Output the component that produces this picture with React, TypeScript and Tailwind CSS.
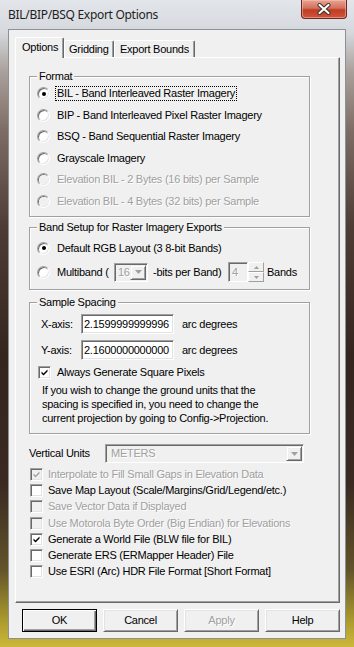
import React from 'react';

const dis = "text-[#a0a0a0] [text-shadow:1px_1px_0_#ffffff]";

function Radio({ checked, disabled }: { checked?: boolean; disabled?: boolean }) {
  return (
    <span className="relative flex h-[13px] w-[13px] shrink-0 items-center justify-center rounded-full border border-t-[#a0a0a0] border-l-[#a0a0a0] border-r-white border-b-white bg-white shadow-[inset_1px_1px_0_#696969,inset_-1px_-1px_0_#e3e3e3]">
      {disabled && <span className="absolute inset-[1px] rounded-full bg-[#f0f0f0]" />}
      {checked && <span className="relative h-[4px] w-[4px] rounded-full bg-black" />}
    </span>
  );
}

function Check({ checked, disabled }: { checked?: boolean; disabled?: boolean }) {
  return (
    <span
      className={`flex h-[13px] w-[13px] shrink-0 items-center justify-center border border-t-[#a0a0a0] border-l-[#a0a0a0] border-r-white border-b-white shadow-[inset_1px_1px_0_#696969,inset_-1px_-1px_0_#e3e3e3] ${
        disabled ? 'bg-[#f0f0f0]' : 'bg-white'
      }`}
    >
      {checked && (
        <svg width="9" height="9" viewBox="0 0 9 9">
          <path d="M1.5 3.5 L3.5 5.5 L7.5 1.5 L7.5 3.5 L3.5 7.5 L1.5 5.5 Z" fill={disabled ? '#a0a0a0' : '#000'} />
        </svg>
      )}
    </span>
  );
}

function Group({ label, h, children }: { label: string; h: string; children: React.ReactNode }) {
  return (
    <div className={`relative w-[281px] border border-[#a0a0a0] shadow-[inset_1px_1px_0_#ffffff,1px_1px_0_#ffffff] ${h}`}>
      <span className="absolute left-[7px] top-[-7px] bg-[#f0f0f0] px-[2px] leading-[13px]">{label}</span>
      {children}
    </div>
  );
}

function Arrow({ color }: { color: string }) {
  return (
    <svg width="7" height="4" viewBox="0 0 7 4">
      <path d="M0 0 H7 L3.5 4 Z" fill={color} />
    </svg>
  );
}

function ComboBtn() {
  return (
    <span className="flex h-full w-[16px] items-center justify-center border border-t-[#f0f0f0] border-l-[#f0f0f0] border-r-[#696969] border-b-[#696969] bg-[#f0f0f0] shadow-[inset_1px_1px_0_#ffffff,inset_-1px_-1px_0_#a0a0a0]">
      <Arrow color="#a0a0a0" />
    </span>
  );
}

function Button({ label, disabled, def }: { label: string; disabled?: boolean; def?: boolean }) {
  return (
    <div
      className={`flex h-[23px] w-[75px] items-center justify-center bg-[#f0f0f0] ${
        def
          ? 'border border-[#000000] shadow-[inset_1px_1px_0_#ffffff,inset_-1px_-1px_0_#696969,inset_-2px_-2px_0_#a0a0a0]'
          : 'border border-t-white border-l-white border-r-[#696969] border-b-[#696969] shadow-[inset_1px_1px_0_#e3e3e3,inset_-1px_-1px_0_#a0a0a0]'
      } ${disabled ? dis : ''}`}
    >
      {label}
    </div>
  );
}

const formats: { t: string; checked?: boolean; disabled?: boolean; focus?: boolean }[] = [
  { t: 'BIL - Band Interleaved Raster Imagery', checked: true, focus: true },
  { t: 'BIP - Band Interleaved Pixel Raster Imagery' },
  { t: 'BSQ - Band Sequential Raster Imagery' },
  { t: 'Grayscale Imagery' },
  { t: 'Elevation BIL - 2 Bytes (16 bits) per Sample', disabled: true },
  { t: 'Elevation BIL - 4 Bytes (32 bits) per Sample', disabled: true },
];

const options: { t: string; checked?: boolean; disabled?: boolean }[] = [
  { t: 'Interpolate to Fill Small Gaps in Elevation Data', checked: true, disabled: true },
  { t: 'Save Map Layout (Scale/Margins/Grid/Legend/etc.)' },
  { t: 'Save Vector Data if Displayed', disabled: true },
  { t: 'Use Motorola Byte Order (Big Endian) for Elevations', disabled: true },
  { t: 'Generate a World File (BLW file for BIL)', checked: true },
  { t: 'Generate ERS (ERMapper Header) File' },
  { t: 'Use ESRI (Arc) HDR File Format [Short Format]' },
];

export default function App() {
  return (
    <div className="flex h-[647px] w-[354px] flex-col bg-[linear-gradient(180deg,#e2e5e9_0%,#d5d8dd_5%,#aaa19c_11%,#7e6d64_20%,#4e3d34_35%,#34251f_55%,#3a2a22_75%,#62532a_88%,#ab9b2e_96%,#cdb83a_100%)] px-[8px] pb-[8px] font-['Liberation_Sans',Arial,sans-serif] text-[11px] leading-[13px] tracking-[-0.25px] text-black">
      {/* title bar */}
      <div className="relative h-[29px] shrink-0">
        <div className="pt-[7px] font-['Noto_Sans',sans-serif] text-[12px] leading-[16px] tracking-[-0.3px] text-[#1e1e1e]">
          BIL/BIP/BSQ Export Options
        </div>
        <div className="absolute right-[-1px] top-0 flex h-[19px] w-[46px] items-center justify-center rounded-b-[4px] border border-t-0 border-[#6b2a20] bg-[linear-gradient(180deg,#e8a492_0%,#d2715c_45%,#c03c22_55%,#d0553a_100%)] shadow-[inset_0_0_0_1px_rgba(255,200,190,0.5)]">
          <svg width="14" height="12" viewBox="0 0 14 12">
            <path d="M2.5 2 L11.5 10 M11.5 2 L2.5 10" stroke="#3a2a2a" strokeWidth="4" strokeLinecap="round" />
            <path d="M2.5 2 L11.5 10 M11.5 2 L2.5 10" stroke="#ffffff" strokeWidth="2.2" strokeLinecap="round" />
          </svg>
        </div>
      </div>

      {/* client area */}
      <div className="flex flex-1 flex-col border border-[#8c9197] bg-[#f0f0f0]">
        {/* tabs */}
        <div className="mt-[7px] flex h-[20px] items-start pl-[6px]">
          <div className="relative z-10 h-[21px] w-[49px] rounded-t-[2px] border border-b-0 border-t-white border-l-white border-r-[#696969] bg-[#f0f0f0] pl-[6px] pt-[3px] shadow-[inset_-1px_0_0_#a0a0a0]">
            Options
          </div>
          <div className="mt-[3px] h-[17px] w-[50px] rounded-t-[2px] border border-b-0 border-t-white border-l-white border-r-[#696969] pl-[4px] pt-[2px] shadow-[inset_-1px_0_0_#a0a0a0]">
            Gridding
          </div>
          <div className="mt-[3px] h-[17px] w-[81px] rounded-t-[2px] border border-b-0 border-t-white border-l-white border-r-[#696969] pl-[5px] pt-[2px] shadow-[inset_-1px_0_0_#a0a0a0]">
            Export Bounds
          </div>
        </div>

        {/* tab panel */}
        <div className="ml-[6px] flex h-[546px] w-[325px] flex-col border border-t-white border-l-white border-r-[#696969] border-b-[#696969] pl-[13px] pt-[18px] shadow-[inset_-1px_-1px_0_#a0a0a0]">
          <Group label="Format" h="h-[141px]">
            <div className="flex flex-col pl-[7px] pt-[6px]">
              {formats.map((f) => (
                <div key={f.t} className="flex h-[21.5px] items-center gap-[5px]">
                  <Radio checked={f.checked} disabled={f.disabled} />
                  <span
                    className={`border px-[1px] leading-[13px] ${f.focus ? 'border-dotted border-black' : 'border-transparent'} ${
                      f.disabled ? dis : ''
                    }`}
                  >
                    {f.t}
                  </span>
                </div>
              ))}
            </div>
          </Group>

          <div className="mt-[10px]">
            <Group label="Band Setup for Raster Imagery Exports" h="h-[63px]">
              <div className="flex flex-col gap-[4px] pl-[7px] pt-[10px]">
                <div className="flex h-[20px] items-center gap-[7px]">
                  <Radio checked />
                  <span>Default RGB Layout (3 8-bit Bands)</span>
                </div>
                <div className="flex h-[20px] items-center">
                  <Radio />
                  <span className="ml-[7px] w-[57px]">Multiband (</span>
                  <div className="flex h-[19px] w-[34px] items-center border border-t-[#a0a0a0] border-l-[#a0a0a0] border-r-white border-b-white bg-[#f0f0f0] p-[1px] shadow-[inset_1px_1px_0_#696969]">
                    <span className={`flex-1 pl-[2px] ${dis}`}>16</span>
                    <ComboBtn />
                  </div>
                  <span className="ml-[5px] w-[75px]">-bits per Band)</span>
                  <div className="flex h-[20px] w-[20px] items-center border border-t-[#a0a0a0] border-l-[#a0a0a0] border-r-white border-b-white bg-[#f0f0f0] pl-[3px] shadow-[inset_1px_1px_0_#696969]">
                    <span className={dis}>4</span>
                  </div>
                  <div className="flex h-[20px] w-[16px] flex-col">
                    <span className="flex flex-1 items-center justify-center border border-t-white border-l-white border-r-[#a0a0a0] border-b-[#a0a0a0] bg-[#f0f0f0]">
                      <svg width="5" height="3" viewBox="0 0 5 3"><path d="M0 3 H5 L2.5 0 Z" fill="#a0a0a0" /></svg>
                    </span>
                    <span className="flex flex-1 items-center justify-center border border-t-white border-l-white border-r-[#a0a0a0] border-b-[#a0a0a0] bg-[#f0f0f0]">
                      <svg width="5" height="3" viewBox="0 0 5 3"><path d="M0 0 H5 L2.5 3 Z" fill="#a0a0a0" /></svg>
                    </span>
                  </div>
                  <span className="ml-[3px]">Bands</span>
                </div>
              </div>
            </Group>
          </div>

          <div className="mt-[12px]">
            <Group label="Sample Spacing" h="h-[132px]">
              <div className="flex flex-col pt-[11px]">
                <div className="flex h-[20px] items-center pl-[11px]">
                  <span className="w-[40px]">X-axis:</span>
                  <div className="flex h-[20px] w-[93px] items-center border border-t-[#a0a0a0] border-l-[#a0a0a0] border-r-white border-b-white bg-white pl-[2px] shadow-[inset_1px_1px_0_#696969,inset_-1px_-1px_0_#e3e3e3]">
                    2.1599999999996
                  </div>
                  <span className="ml-[8px]">arc degrees</span>
                </div>
                <div className="mt-[6px] flex h-[20px] items-center pl-[11px]">
                  <span className="w-[40px]">Y-axis:</span>
                  <div className="flex h-[20px] w-[93px] items-center border border-t-[#a0a0a0] border-l-[#a0a0a0] border-r-white border-b-white bg-white pl-[2px] shadow-[inset_1px_1px_0_#696969,inset_-1px_-1px_0_#e3e3e3]">
                    2.1600000000000
                  </div>
                  <span className="ml-[8px]">arc degrees</span>
                </div>
                <div className="mt-[4px] flex h-[16px] items-center gap-[6px] pl-[8px]">
                  <Check checked />
                  <span>Always Generate Square Pixels</span>
                </div>
                <p className="mt-[3px] pl-[12px] leading-[14px]">
                  If you wish to change the ground units that the
                  <br />
                  spacing is specified in, you need to change the
                  <br />
                  current projection by going to Config-&gt;Projection.
                </p>
              </div>
            </Group>
          </div>

          <div className="mt-[10px] flex h-[19px] items-center">
            <span className="w-[76px]">Vertical Units</span>
            <div className="flex h-[19px] w-[199px] items-center border border-t-[#a0a0a0] border-l-[#a0a0a0] border-r-white border-b-white bg-[#f0f0f0] p-[1px] shadow-[inset_1px_1px_0_#696969]">
              <span className={`flex-1 pl-[4px] ${dis}`}>METERS</span>
              <ComboBtn />
            </div>
          </div>

          <div className="mt-[3px] flex flex-col pl-[1px]">
            {options.map((o) => (
              <div key={o.t} className="flex h-[16.3px] items-center gap-[5px]">
                <Check checked={o.checked} disabled={o.disabled} />
                <span className={o.disabled ? dis : ''}>{o.t}</span>
              </div>
            ))}
          </div>
        </div>

        {/* buttons */}
        <div className="ml-[13px] mt-[6px] flex gap-[6px]">
          <Button label="OK" def />
          <Button label="Cancel" />
          <Button label="Apply" disabled />
          <Button label="Help" />
        </div>
      </div>
    </div>
  );
}
